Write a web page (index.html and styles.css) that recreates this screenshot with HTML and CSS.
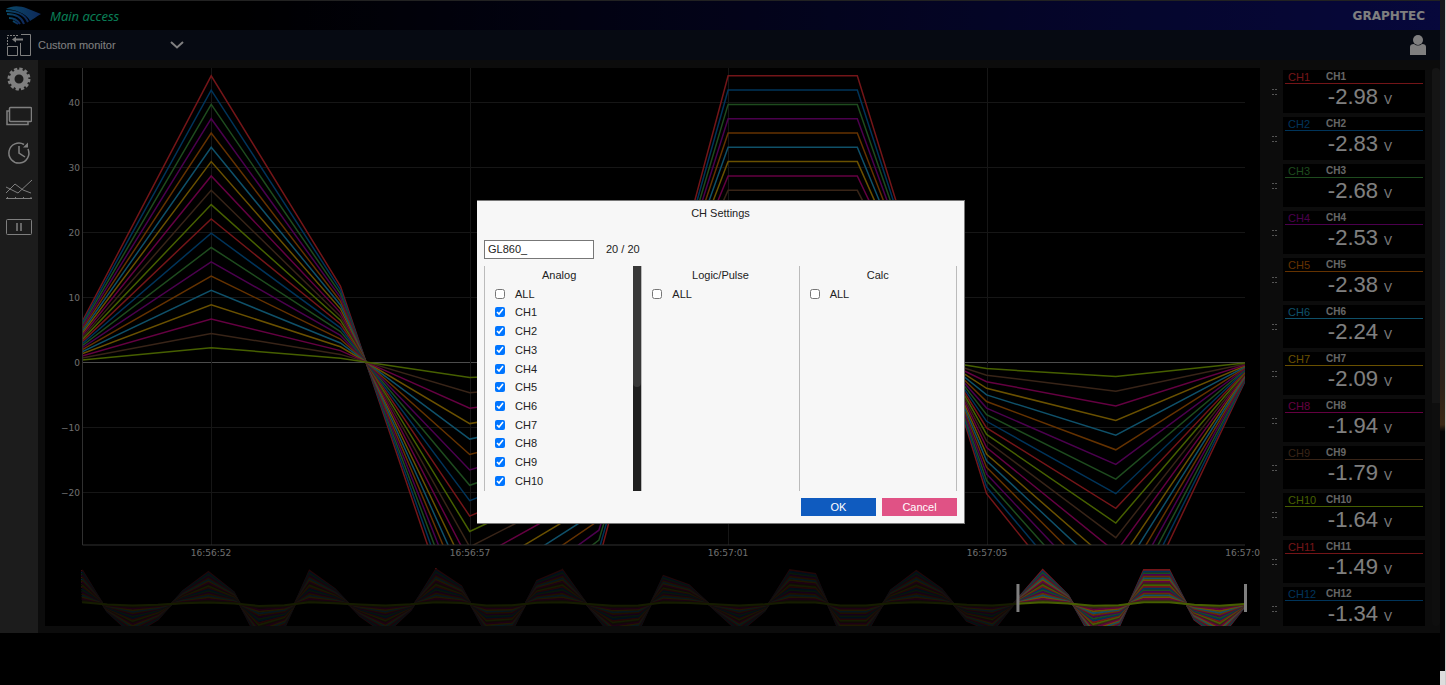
FILE: index.html
```
<!DOCTYPE html>
<html lang="en">
<head>
  <meta charset="UTF-8" />
  <meta name="viewport" content="width=device-width, initial-scale=1.0" />
  <title>Custom monitor</title>
  <link rel="stylesheet" href="styles.css">
</head>
<body>
  <div class="app">
    <header>
      <svg class="logo" viewBox="0 0 36 20" width="36" height="20">
        <defs>
          <linearGradient id="wing" x1="0" x2="1">
            <stop offset="0" stop-color="#1492d0" />
            <stop offset="1" stop-color="#1c50b4" />
          </linearGradient>
        </defs>
        <path d="M0 3C6-1 15 0 20 2L35 8C30 11 27 13 24 15C22 10 14 4 0 3Z" fill="url(#wing)" />
        <g fill="none" stroke="url(#wing)" stroke-width="2">
          <path d="M0 5C12 5 19 9 22 16" />
          <path d="M1 8C10 8 16 12 18 18" />
          <path d="M3 12C9 12 12 15 14 18" />
          <path d="M7 15L12 18" />
        </g>
      </svg>
      <h1>Main access</h1>
      <span class="brand">GRAPHTEC</span>
    </header>
    <div class="toolbar">
      <svg width="26" height="22" viewBox="0 0 26 22" fill="none" stroke="#fff">
        <path d="M1.500 11V1.500H13" stroke-dasharray="2 1" />
        <path d="M17 5.500H9" stroke-width="2" />
        <path d="M6 5.500L10 2.500V8.500Z" fill="#fff" stroke="none" />
        <path d="M1.500 12.500H11.500V21.500H1.500ZM14.500 9V21.500H24.500V.5H15" />
      </svg>
      <button class="screen-select">
        <span>Custom monitor</span>
        <svg width="14" height="8" viewBox="0 0 14 8" fill="none" stroke="#fff" stroke-width="2">
          <path d="M1 1L7 6.500L13 1" />
        </svg>
      </button>
      <svg class="user" width="16" height="20" viewBox="0 0 16 20" fill="#fff">
        <circle cx="8" cy="5" r="5" />
        <path d="M0 20V12Q0 9 4 9Q8 12 12 9Q16 9 16 12V20Z" />
      </svg>
    </div>
    <div class="content">
      <nav>
        <button aria-label="Settings">
          <svg width="26" height="24" viewBox="0 0 26 24" fill="none" stroke="#fff">
            <circle cx="13" cy="12" r="7" stroke-width="5" />
            <circle cx="13" cy="12" r="10" stroke-width="3" stroke-dasharray="3.200 2.036" />
          </svg>
        </button>
        <button aria-label="Windows">
          <svg width="26" height="24" viewBox="0 0 26 24" fill="none" stroke="#fff" stroke-width="1.500">
            <rect x="3.500" y="3.500" width="22" height="14" rx="1" />
            <path d="M3 7H1V20.500H22V18" />
          </svg>
        </button>
        <button aria-label="History">
          <svg width="26" height="24" viewBox="0 0 26 24" fill="none" stroke="#fff" stroke-width="1.500">
            <path d="M22 8A10 10 0 1 1 18 3.500" />
            <path d="M13 5V12L19 16" />
            <path d="M17 6.500L22 6.500V1.500Z" fill="#fff" stroke="none" />
          </svg>
        </button>
        <button aria-label="Graph">
          <svg width="26" height="24" viewBox="0 0 26 24" fill="none" stroke="#fff">
            <path d="M0 15L9 6L17 12L25 15M0 9L12 15L26 2" />
            <path d="M0 20.500H26M1.500 19V21M9.500 19V21M17.500 19V21M25 19V21" />
          </svg>
        </button>
        <button aria-label="Pause">
          <svg width="26" height="24" viewBox="0 0 26 24" fill="none" stroke="#fff">
            <rect x=".5" y="4.500" width="25" height="15" rx="1" />
            <path d="M11 8V16M15 8V16" stroke-width="1.500" />
          </svg>
        </button>
      </nav>
      <main>
        <svg class="chart" id="chart"></svg>
        <div class="channels">
          <ul id="channelList"></ul>
          <div class="scroll-track"></div>
        </div>
      </main>
    </div>
    <footer></footer>
    <div class="backdrop">
      <form class="dialog" onsubmit="return false">
        <h2>CH Settings</h2>
        <div class="device">
          <input type="text" value="GL860_" aria-label="Device">
          <span>20 / 20</span>
        </div>
        <div class="groups">
          <fieldset class="group analog">
            <div class="rows" id="analogRows">
              <h3>Analog</h3>
              <label><input type="checkbox">ALL</label>
            </div>
            <div class="group-scroll"><div></div></div>
          </fieldset>
          <fieldset class="group">
            <div class="rows">
              <h3>Logic/Pulse</h3>
              <label><input type="checkbox">ALL</label>
            </div>
          </fieldset>
          <fieldset class="group">
            <div class="rows">
              <h3>Calc</h3>
              <label><input type="checkbox">ALL</label>
            </div>
          </fieldset>
        </div>
        <div class="actions">
          <button class="ok">OK</button>
          <button class="cancel">Cancel</button>
        </div>
      </form>
    </div>
  </div>
  <div class="edge"></div>
  <script src="script.js"></script>
</body>
</html>
```
FILE: styles.css
```
* {
  box-sizing: border-box;
}
body {
  margin: 0;
  min-height: 100vh;
  display: grid;
  grid-template-columns: 1fr 6px;
  background: #000;
  color: #fff;
  font-family: "Liberation Sans", Arial, sans-serif;
  font-size: 11px;
}
button {
  font: inherit;
  color: inherit;
  border: none;
  background: none;
  padding: 0;
  cursor: pointer;
}
svg {
  display: block;
}
.app {
  position: relative;
  display: flex;
  flex-direction: column;
  height: 100vh;
  min-width: 0;
}
header {
  height: 30px;
  display: flex;
  align-items: center;
  padding: 0 15px 0 6px;
  border-top: 1px solid #444;
  background: linear-gradient(90deg, #000 15%, #0e1078);
}
header h1 {
  margin: 0 0 0 8px;
  font-family: "Open Sans", sans-serif;
  font-size: 13px;
  font-style: italic;
  font-weight: 500;
  color: #14ffb4;
}
.brand {
  margin-left: auto;
  font-family: "DejaVu Sans", sans-serif;
  font-size: 12px;
  font-weight: bold;
}
.toolbar {
  height: 30px;
  display: flex;
  align-items: center;
  padding: 0 14px 0 6px;
  background: #0c1424;
}
.screen-select {
  display: flex;
  align-items: center;
  justify-content: space-between;
  width: 146px;
  margin-left: 6px;
}
.user {
  margin-left: auto;
}
.content {
  flex: 1;
  min-height: 0;
  display: flex;
}
nav {
  width: 38px;
  display: flex;
  flex-direction: column;
  align-items: center;
  gap: 13px;
  padding-top: 7px;
  background: #383838;
}
main {
  flex: 1;
  min-width: 0;
  display: flex;
  padding: 8px 0 7px 7px;
  background: #181818;
}
.chart {
  flex: 1;
  min-width: 0;
  height: 100%;
  background: #000;
  overflow: hidden;
}
.chart text {
  font-family: "DejaVu Sans", sans-serif;
  font-size: 9px;
  fill: #ddd;
}
.channels {
  width: 180px;
  display: flex;
  gap: 7px;
  padding-left: 12px;
  overflow: hidden;
}
.channels ul {
  flex: 1;
  margin: 0;
  padding: 2px 0 0;
  list-style: none;
}
.channels li {
  display: flex;
  align-items: center;
  gap: 6px;
  margin-bottom: 4px;
}
.grip {
  width: 5px;
  height: 6px;
  background:
    linear-gradient(90deg, transparent 2px, #181818 2px 3px, transparent 3px),
    linear-gradient(#aaa 1px, #181818 1px 5px, #aaa 5px);
}
.card {
  flex: 1;
  height: 43px;
  padding: 0 2px;
  background: #000;
}
.card-head {
  display: grid;
  grid-template-columns: 38px 1fr;
  align-items: center;
  height: 14px;
  padding-left: 3px;
  border-bottom: 1px solid;
}
.card-name {
  font-size: 10px;
  font-weight: bold;
  color: #ccc;
}
.card-value {
  display: flex;
  align-items: baseline;
  justify-content: flex-end;
  gap: 6px;
  padding-right: 31px;
  font-size: 22px;
  line-height: 26px;
}
.card-value small {
  font-size: 12px;
}
.scroll-track {
  width: 8px;
  background: linear-gradient(#2a2a2a 60%, #1c1c1c 60%);
  border-radius: 4px;
}
footer {
  height: 52px;
  background: #000;
}
.edge {
  border-right: 1px solid #ccc;
  background: linear-gradient(#16191c 0, #1c2024 40%, #2c2118 56%, #3a2814 62%, #050505 63%, #050505 98%, #ddd 98%);
}
.backdrop {
  position: absolute;
  inset: 0;
  display: flex;
  align-items: center;
  justify-content: center;
  padding: 38px 0 0 2px;
  background: rgba(0, 0, 0, 0.5);
}
.dialog {
  width: 488px;
  padding: 0 7px 7px;
  border: 1px solid #777;
  border-width: 1px 1px 1px 0;
  background: #f7f7f7;
  color: #222;
}
.dialog h2,
.dialog h3 {
  margin: 0;
  font-size: 11px;
  font-weight: normal;
  text-align: center;
}
.dialog h2 {
  line-height: 25px;
}
.device {
  display: flex;
  align-items: center;
  gap: 12px;
  margin: 14px 0 7px;
}
.device input {
  width: 110px;
  height: 19px;
  padding: 0 3px;
  border: 1px solid #777;
  background: #fff;
  color: #222;
  font: inherit;
}
.groups {
  display: grid;
  grid-template-columns: repeat(3, 1fr);
  height: 225px;
  border-right: 1px solid #bbb;
}
.group {
  display: flex;
  min-width: 0;
  height: 225px;
  margin: 0;
  padding: 0;
  border: none;
  border-left: 1px solid #bbb;
}
.rows {
  flex: 1;
  display: grid;
  grid-auto-rows: calc(100% / 12);
  align-items: center;
  overflow: hidden;
}
.rows label {
  display: flex;
  align-items: center;
  gap: 10px;
  padding-left: 10px;
}
.rows input {
  width: 10px;
  height: 10px;
  margin: 0;
}
.group-scroll {
  width: 8px;
  background: #1f1f1f;
}
.group-scroll div {
  height: 54%;
  background: #383838;
  border-radius: 0 0 4px 4px;
}
.actions {
  display: flex;
  justify-content: flex-end;
  gap: 6px;
  margin-top: 7px;
}
.actions button {
  width: 75px;
  height: 18px;
  color: #fff;
}
.ok {
  background: #0f5bbf;
}
.cancel {
  background: #e05285;
}
```
FILE: script.js
```
const COLORS = ['#e62a30', '#0068b4', '#3c963c', '#96009b', '#c86400', '#1ea0d2', '#d2a000', '#c80082', '#70482f', '#8cbe00'];
const CHANNELS = 20;
const VALUES = ['-2.98', '-2.83', '-2.68', '-2.53', '-2.38', '-2.24', '-2.09', '-1.94', '-1.79', '-1.64', '-1.49', '-1.34'];

// CH1 samples, the other channels are scaled down from it
const SAMPLES = [
  44, -10, -40, -20, 17, 41.5, 15.5, -49, -31, 43, 19.5, -15.5, -39, -8, 45, 23, -39, -35,
  30, 44, -2, -43, -36, 36.5, 24.5, -6.5, -36.5, -9, 44, 39, -39, -39, 18, 43, 19.5, -22, -36,
  6.2, 44.1, 11.7, -47.5, -30.5, 44.1, 44.1, -20.3, -45.1, -2.98
];
const VISIBLE = 10;
const TIMES = ['16:56:52', '16:56:57', '16:57:01', '16:57:05', '16:57:0'];

const chart = document.getElementById('chart');

function polylines(samples, x0, width, yOf, strokeWidth) {
  let out = '';
  for (let ch = 0; ch < CHANNELS; ch++) {
    const scale = (CHANNELS - ch) / CHANNELS;
    const points = samples.map((v, i) => {
      const x = x0 + i * width / (samples.length - 1);
      return `${x.toFixed(1)},${yOf(v * scale).toFixed(1)}`;
    }).join(' ');
    out += `<polyline points="${points}" fill="none" stroke="${COLORS[ch % 10]}" stroke-width="${strokeWidth}"/>`;
  }
  return out;
}

function drawChart() {
  const { width, height } = chart.getBoundingClientRect();
  const left = 37;
  const plotWidth = width - left - 15;
  const plotHeight = height - 81;
  const right = left + plotWidth;
  const yOf = v => (45.3 - v) * plotHeight / 73.5;
  let svg = `<clipPath id="plot"><rect x="${left}" y="0" width="${plotWidth}" height="${plotHeight}"/></clipPath>`;

  for (let v = 40; v >= -20; v -= 10) {
    const y = Math.round(yOf(v));
    svg += `<path d="M${left} ${y + 0.5}H${right}" stroke="${v === 0 ? '#999' : '#2c2c2c'}"/>`;
    svg += `<text x="${left - 2}" y="${y + 4}" text-anchor="end">${v < 0 ? '−' + -v : v}</text>`;
  }
  TIMES.forEach((time, i) => {
    const x = Math.round(left + (i * 2 + 1) * plotWidth / 9);
    if (i < 4) svg += `<path d="M${x + 0.5} 0V${plotHeight}" stroke="#2c2c2c"/>`;
    const last = i === TIMES.length - 1;
    svg += `<text x="${last ? width : x}" y="${plotHeight + 11}" text-anchor="${last ? 'end' : 'middle'}">${time}</text>`;
  });
  svg += `<g clip-path="url(#plot)">${polylines(SAMPLES.slice(-VISIBLE), left, plotWidth, yOf, 1.5)}</g>`;
  svg += `<path d="M${left + 0.5} 0V${plotHeight}H${right}" fill="none" stroke="#606060"/>`;

  // overview strip with the selected range
  const top = height - 57;
  const start = left + plotWidth * (SAMPLES.length - VISIBLE) / (SAMPLES.length - 1);
  svg += polylines(SAMPLES, left, plotWidth, v => top + 35 - v * 0.77, 2);
  svg += `<rect x="${left}" y="${top}" width="${start - left}" height="57" fill="#000" opacity=".7"/>`;
  svg += `<rect x="${start - 1}" y="${top + 15}" width="3" height="28" fill="#fff"/>`;
  svg += `<rect x="${right - 1}" y="${top + 15}" width="3" height="28" fill="#fff"/>`;
  chart.innerHTML = svg;
}

document.getElementById('channelList').innerHTML = VALUES.map((value, i) => `
  <li>
    <span class="grip"></span>
    <div class="card">
      <div class="card-head" style="color: ${COLORS[i % 10]}">
        <span>CH${i + 1}</span><span class="card-name">CH${i + 1}</span>
      </div>
      <div class="card-value">${value}<small>V</small></div>
    </div>
  </li>`).join('');

for (let ch = 1; ch <= 10; ch++) {
  document.getElementById('analogRows').insertAdjacentHTML('beforeend',
    `<label><input type="checkbox" checked>CH${ch}</label>`);
}

drawChart();
window.addEventListener('resize', drawChart);
```
